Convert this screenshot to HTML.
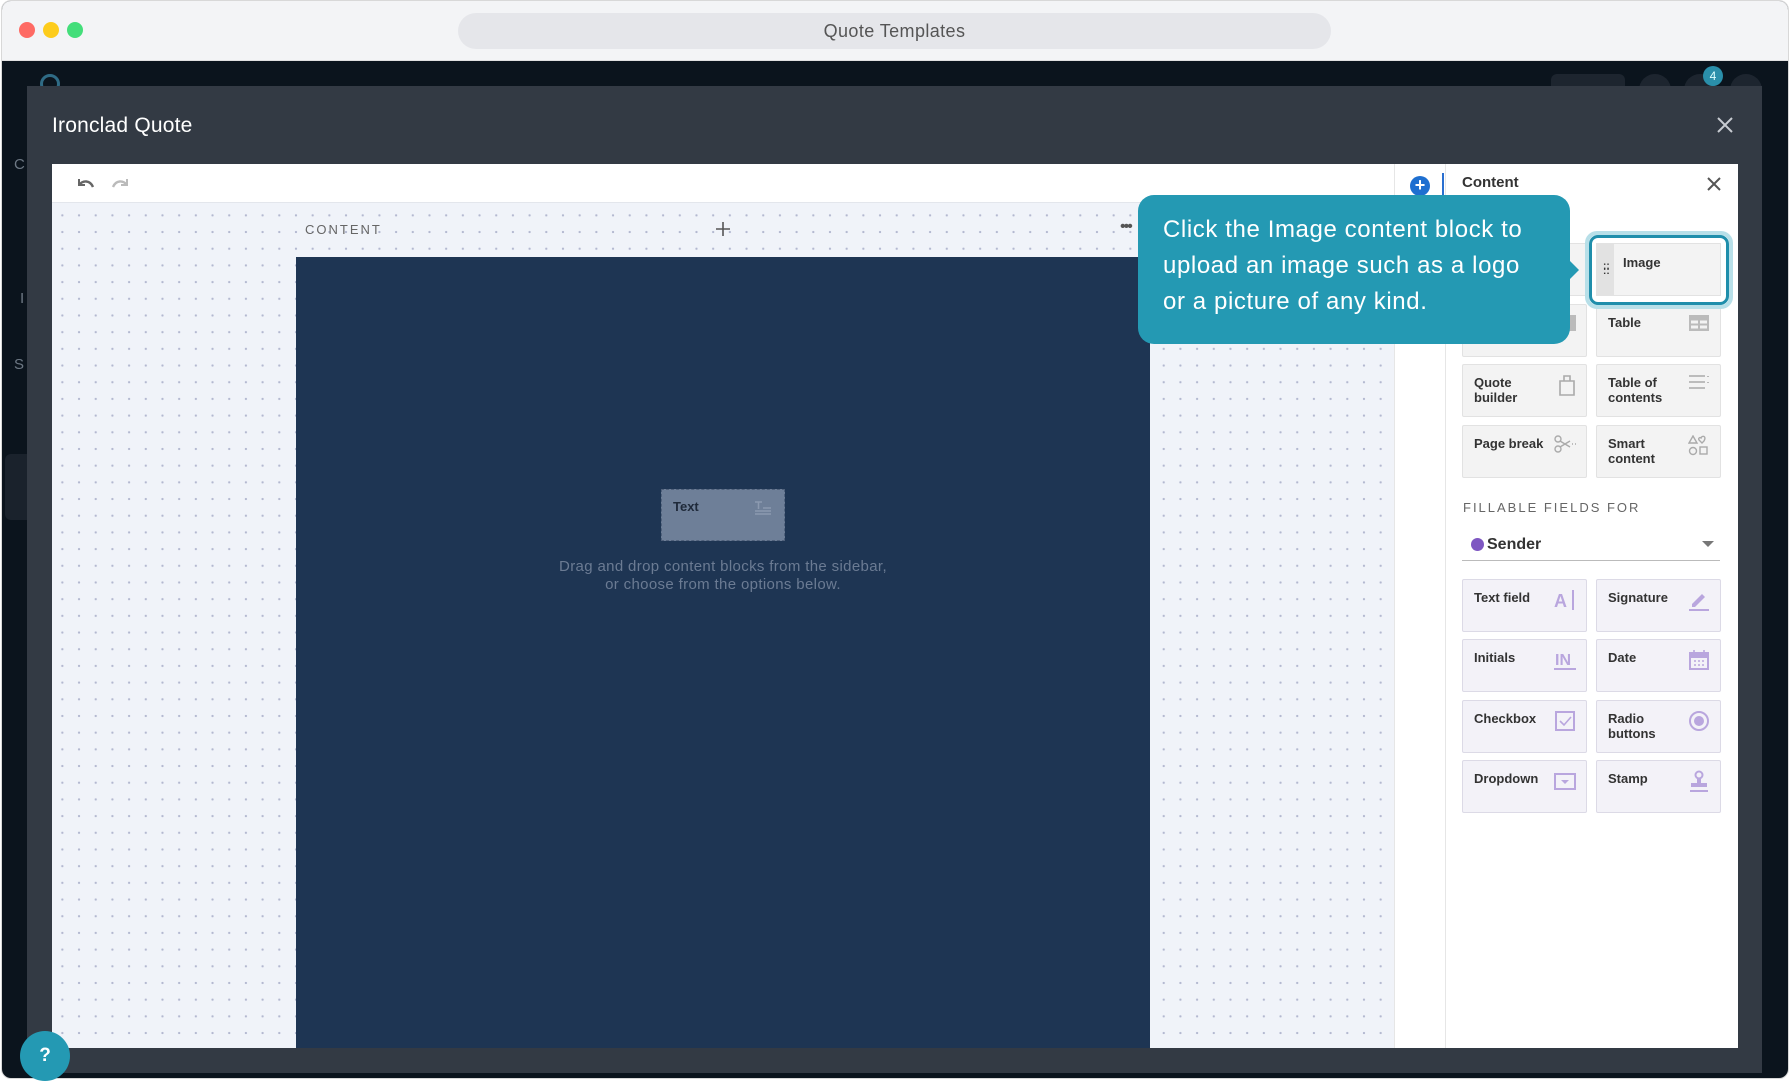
<!DOCTYPE html>
<html><head><meta charset="utf-8">
<style>
*{margin:0;padding:0;box-sizing:border-box}
body{width:1790px;height:1080px;overflow:hidden;background:#fff;font-family:"Liberation Sans",sans-serif;position:relative}
.a{position:absolute}
.card{position:absolute;width:125px;height:53px;background:#f3f3f3;border:1px solid #e2e2e2;border-radius:2px;font-weight:bold;font-size:13px;color:#333;padding:10px 11px;line-height:15px}
.f{background:#f3f2f8;border-color:#dcdae6}
.card svg{position:absolute;right:10px;top:9px}
</style></head><body>
<div class="a" style="left:1px;top:0;width:1788px;height:1079px;border:1px solid #d8d8d8;border-radius:10px;background:#0b141d;overflow:hidden">
 <div class="a" style="left:0;top:0;width:1788px;height:60px;background:#f3f4f6;border-bottom:1px solid #e0e0e0"></div>
</div>
<div class="a" style="left:19px;top:22px;width:16px;height:16px;border-radius:50%;background:#fe6a64"></div>
<div class="a" style="left:43px;top:22px;width:16px;height:16px;border-radius:50%;background:#fdcc1c"></div>
<div class="a" style="left:67px;top:22px;width:16px;height:16px;border-radius:50%;background:#43de7a"></div>
<div class="a" style="left:458px;top:13px;width:873px;height:36px;border-radius:18px;background:#e5e6ea;text-align:center;line-height:36px;font-size:18px;color:#555;letter-spacing:0.4px">Quote Templates</div>
<div class="a" style="left:40px;top:74px;width:20px;height:20px;border:3px solid #2f6b85;border-radius:50%"></div>
<div class="a" style="left:14px;top:156px;color:#6d7884;font-size:15px">C</div>
<div class="a" style="left:20px;top:290px;color:#6d7884;font-size:15px">I</div>
<div class="a" style="left:14px;top:356px;color:#6d7884;font-size:15px">S</div>
<div class="a" style="left:5px;top:454px;width:30px;height:66px;background:#1a222c;border-radius:6px"></div>
<div class="a" style="left:1551px;top:74px;width:74px;height:20px;background:#1d252f;border-radius:6px"></div>
<div class="a" style="left:1639px;top:74px;width:32px;height:32px;background:#1d252f;border-radius:50%"></div>
<div class="a" style="left:1684px;top:74px;width:32px;height:32px;background:#1d252f;border-radius:50%"></div>
<div class="a" style="left:1730px;top:74px;width:32px;height:32px;background:#1d252f;border-radius:50%"></div>
<div class="a" style="left:1703px;top:66px;width:20px;height:20px;background:#2a8faa;border-radius:50%;color:#dff;font-size:12px;text-align:center;line-height:20px">4</div>
<div class="a" style="left:27px;top:86px;width:1735px;height:987px;background:#333a44"></div>
<div class="a" style="left:52px;top:114px;color:#fff;font-size:21px;letter-spacing:0.2px">Ironclad Quote</div>
<svg class="a" style="left:1716px;top:116px" width="18" height="18" viewBox="0 0 18 18"><path d="M2 2L16 16M16 2L2 16" stroke="#c8ccd2" stroke-width="2"/></svg>
<div class="a" style="left:52px;top:164px;width:1686px;height:884px;background:#fff"></div>
<svg class="a" style="left:74px;top:175px" width="24" height="16" viewBox="0 0 24 16"><path d="M5 4v6h6" fill="none" stroke="#666" stroke-width="2"/><path d="M5 10c4-5 11-5 14 2" fill="none" stroke="#666" stroke-width="2.4"/></svg>
<svg class="a" style="left:108px;top:175px" width="24" height="16" viewBox="0 0 24 16"><path d="M19 4v6h-6" fill="none" stroke="#bbb" stroke-width="2"/><path d="M19 10c-4-5-11-5-14 2" fill="none" stroke="#bbb" stroke-width="2.4"/></svg>
<div class="a" style="left:52px;top:202px;width:1342px;height:846px;background-color:#f0f3f9;background-image:radial-gradient(circle,#b3b8d0 1px,transparent 1.3px);background-size:16.7px 16.7px;background-position:2px 4px;border-top:1px solid #e3e6ec"></div>
<div class="a" style="left:305px;top:222px;font-size:13px;letter-spacing:2px;color:#666">CONTENT</div>
<svg class="a" style="left:715px;top:221px" width="16" height="16"><path d="M8 1v14M1 8h14" stroke="#555" stroke-width="1.6"/></svg>
<div class="a" style="left:1120px;top:218px;font-size:16px;color:#555;letter-spacing:-2px">•••</div>
<div class="a" style="left:296px;top:257px;width:854px;height:791px;background:#1e3553"></div>
<div class="a" style="left:661px;top:489px;width:124px;height:52px;background:#6e7f98;border:1px dashed #4f607a;font-weight:bold;font-size:13px;color:#1f2a3a;padding:9px 11px">Text
<svg class="a" style="right:12px;top:10px" width="18" height="16"><path d="M1 2h7M4.5 2v7M9 8h8M1 11h16M1 14h16" stroke="#8c9ab0" stroke-width="1.5"/></svg></div>
<div class="a" style="left:473px;top:558px;width:500px;text-align:center;font-size:15px;line-height:18px;color:#6b7b93;letter-spacing:0.35px">Drag and drop content blocks from the sidebar,<br>or choose from the options below.</div>
<div class="a" style="left:1394px;top:164px;width:1px;height:884px;background:#e6e6e6"></div>
<div class="a" style="left:1445px;top:164px;width:1px;height:884px;background:#e6e6e6"></div>
<div class="a" style="left:1410px;top:176px;width:20px;height:20px;border-radius:50%;background:#1e6fd0;color:#fff;text-align:center;line-height:19px;font-size:18px;font-weight:bold">+</div>
<div class="a" style="left:1442px;top:173px;width:2px;height:22px;background:#2a6fd0"></div>
<div class="a" style="left:1462px;top:174px;font-size:15px;font-weight:bold;color:#333">Content</div>
<svg class="a" style="left:1706px;top:176px" width="16" height="16"><path d="M2 2L14 14M14 2L2 14" stroke="#555" stroke-width="2"/></svg>

<div class="card" style="left:1462px;top:243px"></div>
<div class="card" style="left:1462px;top:304px"><div class="a" style="right:10px;top:10px;width:12px;height:16px;background:#bbb"></div></div>
<div class="card" style="left:1596px;top:304px">Table<svg width="22" height="18"><rect x="1" y="1" width="20" height="16" fill="#bbb"/><path d="M3 8h7M12 8h7M3 13h7M12 13h7" stroke="#f3f3f3" stroke-width="3"/></svg></div>
<div class="card" style="left:1462px;top:364px">Quote<br>builder<svg width="18" height="22"><path d="M2 7h14v14H2zM6 7V2h6v5" fill="none" stroke="#aaa" stroke-width="1.6"/></svg></div>
<div class="card" style="left:1596px;top:364px">Table of<br>contents<svg width="22" height="16"><path d="M1 2h16M1 8h16M1 14h16M20 2v1M20 8v1" stroke="#aaa" stroke-width="1.6"/></svg></div>
<div class="card" style="left:1462px;top:425px">Page break<svg width="22" height="18"><circle cx="4" cy="4" r="3" fill="none" stroke="#aaa" stroke-width="1.4"/><circle cx="4" cy="14" r="3" fill="none" stroke="#aaa" stroke-width="1.4"/><path d="M6 6l10 6M6 12l10-6M18 9h1M21 9h1" stroke="#aaa" stroke-width="1.4"/></svg></div>
<div class="card" style="left:1596px;top:425px">Smart<br>content<svg width="22" height="22"><path d="M5 1l4 7H1z" fill="none" stroke="#aaa" stroke-width="1.4"/><path d="M13 3c1-3 6-2 3 3l-2 2-3-3c-1-2 1-3 2-2z" fill="none" stroke="#aaa" stroke-width="1.4"/><circle cx="5" cy="16" r="3.5" fill="none" stroke="#aaa" stroke-width="1.4"/><rect x="12" y="12" width="7" height="7" fill="none" stroke="#aaa" stroke-width="1.4"/></svg></div>

<div class="a" style="left:1585px;top:231px;width:148px;height:78px;border-radius:12px;border:4px solid #b7dfe8"></div>
<div class="a" style="left:1589px;top:235px;width:140px;height:70px;border-radius:9px;border:3px solid #1f8eab;background:#fff"></div>
<div class="a" style="left:1596px;top:243px;width:125px;height:53px;background:#f3f3f3;border:1px solid #e2e2e2"><div class="a" style="left:0;top:0;width:17px;height:51px;background:#e2e2e2"></div><div class="a" style="left:6px;top:20px;color:#333;font-size:10px;line-height:5px;font-weight:bold">::<br>::</div><div class="a" style="left:26px;top:11px;font-weight:bold;font-size:13px;color:#333">Image</div></div>

<div class="a" style="left:1463px;top:500px;font-size:13px;letter-spacing:2px;color:#666">FILLABLE FIELDS FOR</div>
<div class="a" style="left:1471px;top:538px;width:13px;height:13px;border-radius:50%;background:#7e57c2"></div>
<div class="a" style="left:1487px;top:536px;font-size:16px;font-weight:bold;color:#333">Sender</div>
<div class="a" style="left:1702px;top:541px;width:0;height:0;border-left:6px solid transparent;border-right:6px solid transparent;border-top:6px solid #777"></div>
<div class="a" style="left:1462px;top:560px;width:258px;height:1px;background:#bbb"></div>

<div class="card f" style="left:1462px;top:579px">Text field<svg width="22" height="22"><text x="0" y="18" font-size="18" fill="#b9a6de" font-family="Liberation Sans">A</text><path d="M19 1v20" stroke="#b9a6de" stroke-width="2"/></svg></div>
<div class="card f" style="left:1596px;top:579px">Signature<svg width="22" height="22"><path d="M4 15l10-10 3 3-10 10H4z" fill="#b9a6de"/><path d="M1 21h20" stroke="#b9a6de" stroke-width="2"/></svg></div>
<div class="card f" style="left:1462px;top:639px">Initials<svg width="22" height="22"><text x="1" y="16" font-size="16" fill="#b9a6de" font-family="Liberation Sans">IN</text><path d="M0 20h22" stroke="#b9a6de" stroke-width="2"/></svg></div>
<div class="card f" style="left:1596px;top:639px">Date<svg width="22" height="22"><rect x="2" y="4" width="18" height="16" fill="none" stroke="#b9a6de" stroke-width="2"/><path d="M2 7h18" stroke="#b9a6de" stroke-width="4"/><path d="M6 1v4M16 1v4M6 12h2M10 12h2M14 12h2M6 16h2M10 16h2M14 16h2" stroke="#b9a6de" stroke-width="1.6"/></svg></div>
<div class="card f" style="left:1462px;top:700px">Checkbox<svg width="22" height="22"><rect x="2" y="2" width="18" height="18" fill="none" stroke="#b9a6de" stroke-width="2"/><path d="M6 11l4 4 7-8" fill="none" stroke="#b9a6de" stroke-width="1.6"/></svg></div>
<div class="card f" style="left:1596px;top:700px">Radio<br>buttons<svg width="22" height="22"><circle cx="11" cy="11" r="9" fill="none" stroke="#b9a6de" stroke-width="2"/><circle cx="11" cy="11" r="5" fill="#b9a6de"/></svg></div>
<div class="card f" style="left:1462px;top:760px">Dropdown<svg width="22" height="22"><rect x="1" y="4" width="20" height="15" fill="none" stroke="#b9a6de" stroke-width="2"/><path d="M7 10h8l-4 4z" fill="#b9a6de"/></svg></div>
<div class="card f" style="left:1596px;top:760px">Stamp<svg width="22" height="22"><circle cx="11" cy="5" r="3.5" fill="none" stroke="#b9a6de" stroke-width="2"/><path d="M9 8h4v5h6v4H3v-4h6z" fill="#b9a6de"/><path d="M2 21h18" stroke="#b9a6de" stroke-width="2"/></svg></div>

<div class="a" style="left:1138px;top:195px;width:432px;height:149px;background:#2499b3;border-radius:16px;color:#fff;font-size:24px;line-height:36px;padding:17px 0 0 25px;letter-spacing:0.6px;white-space:nowrap">Click the Image content block to<br>upload an image such as a logo<br>or a picture of any kind.</div>
<div class="a" style="left:1570px;top:261px;width:0;height:0;border-top:9px solid transparent;border-bottom:9px solid transparent;border-left:9px solid #2499b3"></div>
<div class="a" style="left:20px;top:1031px;width:50px;height:50px;border-radius:50%;background:#2499b3;color:#fff;font-weight:bold;font-size:19px;text-align:center;line-height:50px">?</div>
</body></html>
